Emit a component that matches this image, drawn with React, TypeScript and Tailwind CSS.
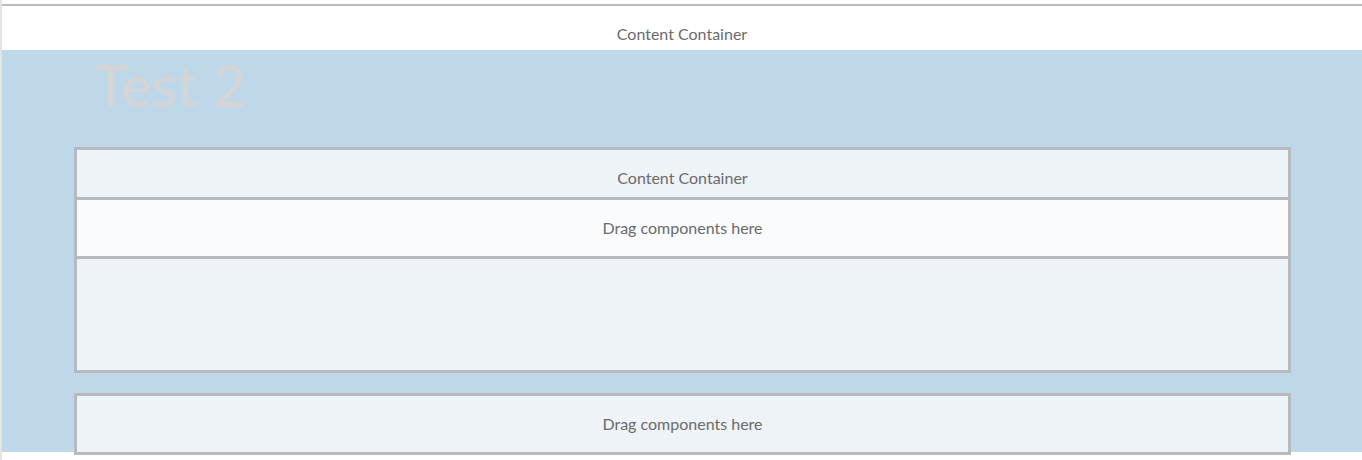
import React from "react";

export default function App() {
  const font = { fontFamily: "Lato, 'Open Sans', sans-serif" };
  return (
    <div className="w-[1362px] h-[460px] bg-white border-l-2 border-[#e4e4e4] overflow-hidden" style={font}>
      <div className="mt-[4px] h-[2px] bg-[#bdbdbd]" />
      <div className="h-[44px] flex items-end justify-center pb-[4px] text-[16px] text-[#6b6b6b]">
        Content Container
      </div>
      <div className="bg-[#bed8e9] h-[402px] px-[72px] pr-[71px]">
        <div className="h-[97px] pl-[20px]">
          <div className="text-[58px] leading-[70px] font-normal text-[#d6d4d5]">Test 2</div>
        </div>
        <div className="border-[3px] border-[#b7b9bd] bg-[#eef3f7]">
          <div className="h-[47px] flex items-center justify-center pt-[8px] text-[16px] text-[#6b6b6b]">
            Content Container
          </div>
          <div className="h-[62px] border-y-[3px] border-[#b7b9bd] bg-[#f9fbfd] flex items-center justify-center text-[16px] text-[#6b6b6b]">
            Drag components here
          </div>
          <div className="h-[111px]" />
        </div>
        <div className="mt-[20px] h-[62px] border-[3px] border-[#b7b9bd] bg-[#eef3f7] flex items-center justify-center text-[16px] text-[#6b6b6b]">
          Drag components here
        </div>
      </div>
    </div>
  );
}
